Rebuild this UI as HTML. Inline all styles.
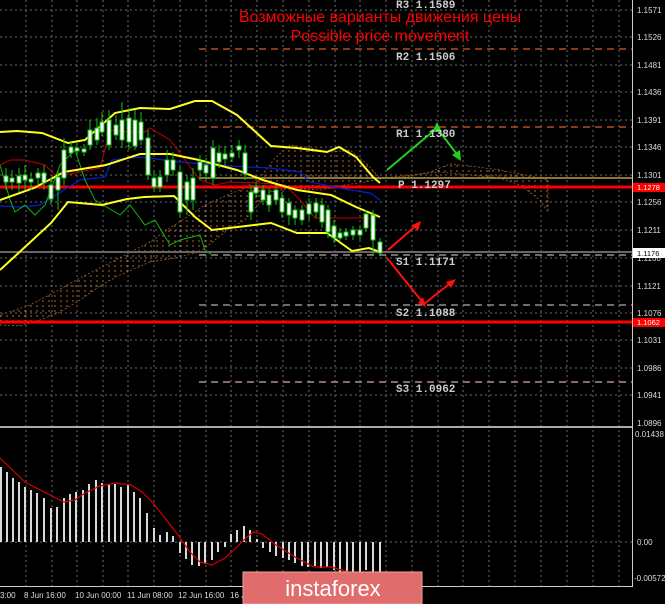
<!DOCTYPE html>
<html><head><meta charset="utf-8"><style>
html,body{margin:0;padding:0;background:#000;}
svg{display:block}
text{font-family:"Liberation Sans","DejaVu Sans",sans-serif}
.ax{fill:#ddd;font-size:8px}
.pv{fill:#ccc;font-family:"Liberation Mono",monospace;font-size:11px;font-weight:bold}
.dt{fill:#ddd;font-size:8px}
</style></head><body>
<svg width="665" height="604" viewBox="0 0 665 604" xmlns="http://www.w3.org/2000/svg">
<defs>
<pattern id="cl" width="6" height="5" patternUnits="userSpaceOnUse">
<line x1="1" y1="0" x2="1" y2="2" stroke="#b06828" stroke-width="1"/>
</pattern>
</defs>
<rect width="665" height="604" fill="#000"/>
<g stroke="#888" stroke-dasharray="2,3" stroke-width="1" opacity="0.8">
<line x1="0" y1="10" x2="632" y2="10"/><line x1="0" y1="37" x2="632" y2="37"/><line x1="0" y1="65" x2="632" y2="65"/><line x1="0" y1="92" x2="632" y2="92"/><line x1="0" y1="120" x2="632" y2="120"/><line x1="0" y1="147" x2="632" y2="147"/><line x1="0" y1="175" x2="632" y2="175"/><line x1="0" y1="202" x2="632" y2="202"/><line x1="0" y1="230" x2="632" y2="230"/><line x1="0" y1="258" x2="632" y2="258"/><line x1="0" y1="286" x2="632" y2="286"/><line x1="0" y1="313" x2="632" y2="313"/><line x1="0" y1="340" x2="632" y2="340"/><line x1="0" y1="368" x2="632" y2="368"/><line x1="0" y1="395" x2="632" y2="395"/>
<line x1="0" y1="542" x2="632" y2="542"/>
<line x1="26" y1="0" x2="26" y2="587"/><line x1="52" y1="0" x2="52" y2="587"/><line x1="77" y1="0" x2="77" y2="587"/><line x1="103" y1="0" x2="103" y2="587"/><line x1="128" y1="0" x2="128" y2="587"/><line x1="154" y1="0" x2="154" y2="587"/><line x1="180" y1="0" x2="180" y2="587"/><line x1="206" y1="0" x2="206" y2="587"/><line x1="231" y1="0" x2="231" y2="587"/><line x1="257" y1="0" x2="257" y2="587"/><line x1="283" y1="0" x2="283" y2="587"/><line x1="309" y1="0" x2="309" y2="587"/><line x1="335" y1="0" x2="335" y2="587"/><line x1="360" y1="0" x2="360" y2="587"/><line x1="386" y1="0" x2="386" y2="587"/><line x1="412" y1="0" x2="412" y2="587"/><line x1="438" y1="0" x2="438" y2="587"/><line x1="463" y1="0" x2="463" y2="587"/><line x1="489" y1="0" x2="489" y2="587"/><line x1="515" y1="0" x2="515" y2="587"/><line x1="541" y1="0" x2="541" y2="587"/><line x1="567" y1="0" x2="567" y2="587"/><line x1="593" y1="0" x2="593" y2="587"/><line x1="619" y1="0" x2="619" y2="587"/>
</g>
<polygon fill="url(#cl)" stroke="#a06030" stroke-dasharray="2,2" stroke-width="0.8" points="0,325 20,326 40,320 60,312 80,300 100,286 120,275 150,262 175,258 200,252 215,240 230,228 245,220 258,205 270,192 290,188 320,190 345,185 365,182 385,178 410,175 440,172 470,175 500,178 520,185 540,200 548,212 548,180 530,176 500,170 470,166 450,164 430,172 400,178 380,178 368,165 350,150 330,152 310,148 290,145 275,158 262,175 245,188 225,196 205,205 190,215 170,228 150,242 125,255 100,268 80,278 55,292 30,305 0,315"/>
<g stroke-width="1.5" stroke-dasharray="7,5">
<line x1="199" y1="49" x2="632" y2="49" stroke="#b05020"/>
<line x1="199" y1="127" x2="632" y2="127" stroke="#b05020"/>
<line x1="199" y1="255" x2="632" y2="255" stroke="#9a8a8a"/>
<line x1="199" y1="305" x2="632" y2="305" stroke="#9a8a8a"/>
<line x1="199" y1="382" x2="632" y2="382" stroke="#b09090"/>
</g>
<line x1="199" y1="178" x2="632" y2="178" stroke="#b8a040" stroke-width="1.5"/>
<line x1="0" y1="252" x2="632" y2="252" stroke="#666" stroke-width="2"/>
<line x1="0" y1="187" x2="632" y2="187" stroke="#ff0000" stroke-width="3"/>
<line x1="0" y1="322" x2="632" y2="322" stroke="#ff0000" stroke-width="3"/>
<polyline fill="none" stroke="#0020d0" stroke-width="1.2" points="0,206 20,207 40,205 80,180 105,177 112,160 140,157 180,162 230,166 270,168 300,172 310,182 350,190 370,193 380,200"/>
<polyline fill="none" stroke="#c00000" stroke-width="1" points="0,165 10,160 25,160 45,165 55,175 65,175 80,172 100,168 110,130 130,132 145,132 150,128 170,140 200,180 215,185 230,182 260,183 285,185 300,200 315,218 345,218 370,218"/>
<polyline fill="none" stroke="#10b010" stroke-width="1" points="0,165 10,200 15,212 25,205 35,215 45,205 60,165 75,150 85,180 95,200 120,215 130,205 145,225 155,220 170,245 180,240 200,235 205,250 212,255"/>
<g fill="none" stroke="#ffff20" stroke-width="2">
<polyline points="0,132 17,131 42,133 68,143 85,140 115,113 140,108 170,109 195,101 212,101 237,115 271,146 297,148 327,152 339,147 356,157 373,177 380,183"/>
<polyline points="0,200 34,188 64,172 106,165 140,154 170,154 199,160 237,170 263,180 297,190 331,195 356,207 380,217"/>
<polyline points="0,270 25,247 51,223 68,202 102,205 127,199 144,197 174,196 195,217 212,230 246,226 271,223 297,233 327,233 352,251 369,248 380,252"/>
</g>
<g stroke="#10c010" stroke-width="1" fill="#fff">
<line x1="6" y1="168" x2="6" y2="190"/><rect x="4" y="176" width="4" height="6"/>
<line x1="12" y1="170" x2="12" y2="190"/><rect x="10" y="178" width="4" height="4"/>
<line x1="19" y1="168" x2="19" y2="192"/><rect x="17" y="176" width="4" height="7"/>
<line x1="25" y1="165" x2="25" y2="190"/><rect x="23" y="175" width="4" height="5"/>
<line x1="31" y1="172" x2="31" y2="190"/><rect x="29" y="179" width="4" height="3"/>
<line x1="38" y1="168" x2="38" y2="186"/><rect x="36" y="173" width="4" height="5"/>
<line x1="44" y1="165" x2="44" y2="190"/><rect x="42" y="173" width="4" height="10"/>
<line x1="51" y1="178" x2="51" y2="205"/><rect x="49" y="185" width="4" height="14"/>
<line x1="58" y1="170" x2="58" y2="210"/><rect x="56" y="177" width="4" height="13"/>
<line x1="64" y1="138" x2="64" y2="185"/><rect x="62" y="150" width="4" height="28"/>
<line x1="71" y1="142" x2="71" y2="158"/><rect x="69" y="147" width="4" height="6"/>
<line x1="77" y1="143" x2="77" y2="155"/><rect x="75" y="148" width="4" height="3"/>
<line x1="84" y1="144" x2="84" y2="156"/><rect x="82" y="149" width="4" height="3"/>
<line x1="90" y1="120" x2="90" y2="150"/><rect x="88" y="130" width="4" height="15"/>
<line x1="97" y1="118" x2="97" y2="145"/><rect x="95" y="128" width="4" height="12"/>
<line x1="102" y1="112" x2="102" y2="136"/><rect x="100" y="122" width="4" height="10"/>
<line x1="109" y1="110" x2="109" y2="150"/><rect x="107" y="120" width="4" height="25"/>
<line x1="116" y1="115" x2="116" y2="140"/><rect x="114" y="125" width="4" height="10"/>
<line x1="122" y1="102" x2="122" y2="148"/><rect x="120" y="120" width="4" height="20"/>
<line x1="129" y1="108" x2="129" y2="150"/><rect x="127" y="118" width="4" height="24"/>
<line x1="135" y1="110" x2="135" y2="150"/><rect x="133" y="120" width="4" height="26"/>
<line x1="141" y1="112" x2="141" y2="145"/><rect x="139" y="122" width="4" height="18"/>
<line x1="148" y1="130" x2="148" y2="180"/><rect x="146" y="138" width="4" height="37"/>
<line x1="154" y1="170" x2="154" y2="192"/><rect x="152" y="178" width="4" height="9"/>
<line x1="160" y1="170" x2="160" y2="192"/><rect x="158" y="177" width="4" height="10"/>
<line x1="167" y1="150" x2="167" y2="182"/><rect x="165" y="160" width="4" height="15"/>
<line x1="173" y1="152" x2="173" y2="176"/><rect x="171" y="160" width="4" height="10"/>
<line x1="180" y1="165" x2="180" y2="218"/><rect x="178" y="172" width="4" height="40"/>
<line x1="187" y1="175" x2="187" y2="215"/><rect x="185" y="182" width="4" height="18"/>
<line x1="193" y1="168" x2="193" y2="210"/><rect x="191" y="178" width="4" height="22"/>
<line x1="200" y1="155" x2="200" y2="180"/><rect x="198" y="162" width="4" height="8"/>
<line x1="206" y1="158" x2="206" y2="180"/><rect x="204" y="165" width="4" height="8"/>
<line x1="213" y1="140" x2="213" y2="185"/><rect x="211" y="148" width="4" height="30"/>
<line x1="219" y1="145" x2="219" y2="168"/><rect x="217" y="153" width="4" height="9"/>
<line x1="225" y1="146" x2="225" y2="165"/><rect x="223" y="154" width="4" height="5"/>
<line x1="232" y1="145" x2="232" y2="162"/><rect x="230" y="153" width="4" height="4"/>
<line x1="239" y1="140" x2="239" y2="158"/><rect x="237" y="146" width="4" height="4"/>
<line x1="245" y1="145" x2="245" y2="180"/><rect x="243" y="153" width="4" height="21"/>
<line x1="251" y1="185" x2="251" y2="220"/><rect x="249" y="192" width="4" height="20"/>
<line x1="256" y1="182" x2="256" y2="198"/><rect x="254" y="187" width="4" height="6"/>
<line x1="263" y1="185" x2="263" y2="205"/><rect x="261" y="190" width="4" height="10"/>
<line x1="269" y1="188" x2="269" y2="212"/><rect x="267" y="195" width="4" height="10"/>
<line x1="276" y1="185" x2="276" y2="205"/><rect x="274" y="190" width="4" height="10"/>
<line x1="282" y1="192" x2="282" y2="218"/><rect x="280" y="198" width="4" height="14"/>
<line x1="289" y1="198" x2="289" y2="225"/><rect x="287" y="203" width="4" height="12"/>
<line x1="295" y1="205" x2="295" y2="225"/><rect x="293" y="210" width="4" height="8"/>
<line x1="302" y1="205" x2="302" y2="225"/><rect x="300" y="210" width="4" height="10"/>
<line x1="309" y1="198" x2="309" y2="220"/><rect x="307" y="204" width="4" height="10"/>
<line x1="316" y1="198" x2="316" y2="218"/><rect x="314" y="203" width="4" height="9"/>
<line x1="322" y1="198" x2="322" y2="228"/><rect x="320" y="205" width="4" height="17"/>
<line x1="328" y1="205" x2="328" y2="238"/><rect x="326" y="210" width="4" height="22"/>
<line x1="334" y1="220" x2="334" y2="243"/><rect x="332" y="226" width="4" height="12"/>
<line x1="340" y1="228" x2="340" y2="242"/><rect x="338" y="233" width="4" height="5"/>
<line x1="346" y1="228" x2="346" y2="240"/><rect x="344" y="232" width="4" height="4"/>
<line x1="353" y1="226" x2="353" y2="240"/><rect x="351" y="230" width="4" height="5"/>
<line x1="360" y1="226" x2="360" y2="240"/><rect x="358" y="230" width="4" height="5"/>
<line x1="366" y1="210" x2="366" y2="232"/><rect x="364" y="214" width="4" height="14"/>
<line x1="373" y1="210" x2="373" y2="255"/><rect x="371" y="215" width="4" height="25"/>
<line x1="380" y1="238" x2="380" y2="256"/><rect x="378" y="242" width="4" height="11"/>
</g>
<g fill="none" stroke-width="2">
<polyline points="387,170 437,128 459,157" stroke="#20d020"/>
<line x1="388" y1="250" x2="419" y2="223" stroke="#ff1010"/>
<polyline points="387,258 424,304 453,281" stroke="#ff1010"/>
</g>
<polygon points="437,122 442,132 432,132" fill="#20d020"/>
<polygon points="461,161 452,155 460,150" fill="#20d020"/>
<polygon points="421,221 418,231 412,225" fill="#ff1010"/>
<polygon points="456,279 451,288 446,282" fill="#ff1010"/>
<polygon points="426,307 418,303 423,297" fill="#ff1010"/>
<text class="pv" x="396" y="8">R3 1.1589</text>
<text class="pv" x="396" y="60">R2 1.1506</text>
<text class="pv" x="396" y="137">R1 1.1380</text>
<text class="pv" x="398" y="188">P 1.1297</text>
<text class="pv" x="396" y="265">S1 1.1171</text>
<text class="pv" x="396" y="316">S2 1.1088</text>
<text class="pv" x="396" y="392">S3 1.0962</text>
<text x="380" y="22" text-anchor="middle" fill="#ff0000" font-size="16">Возможные варианты движения цены</text>
<text x="380" y="41" text-anchor="middle" fill="#ff0000" font-size="16">Possible price movement</text>
<rect x="0" y="426" width="632" height="2" fill="#aaa"/>
<line x1="632.5" y1="0" x2="632.5" y2="587" stroke="#ccc"/>
<line x1="0" y1="586.5" x2="632" y2="586.5" stroke="#ccc"/>
<g class="ax">
<text x="637" y="13">1.1571</text><text x="637" y="40">1.1526</text><text x="637" y="68">1.1481</text><text x="637" y="95">1.1436</text><text x="637" y="123">1.1391</text><text x="637" y="150">1.1346</text><text x="637" y="178">1.1301</text><text x="637" y="205">1.1256</text><text x="637" y="233">1.1211</text><text x="637" y="261">1.1166</text><text x="637" y="289">1.1121</text><text x="637" y="316">1.1076</text><text x="637" y="343">1.1031</text><text x="637" y="371">1.0986</text><text x="637" y="398">1.0941</text><text x="637" y="426">1.0896</text>
<text x="635" y="437">0.01438</text><text x="637" y="545">0.00</text><text x="634" y="581">-0.00572</text>
</g>
<rect x="633" y="183" width="32" height="9" fill="#ff0000"/><text x="637" y="190" fill="#fff" font-size="7.5">1.1278</text>
<rect x="633" y="318" width="32" height="9" fill="#ff0000"/><text x="637" y="325" fill="#fff" font-size="7.5">1.1062</text>
<rect x="633" y="248" width="32" height="10" fill="#fff"/><text x="637" y="256" fill="#000" font-size="7.5">1.1176</text>
<g stroke="#d8d8d8" stroke-width="2">
<line x1="1" y1="542" x2="1" y2="467"/><line x1="7" y1="542" x2="7" y2="472"/><line x1="13" y1="542" x2="13" y2="478"/><line x1="19" y1="542" x2="19" y2="482"/><line x1="25" y1="542" x2="25" y2="487"/><line x1="31" y1="542" x2="31" y2="490"/><line x1="37" y1="542" x2="37" y2="493"/><line x1="44" y1="542" x2="44" y2="498"/><line x1="51" y1="542" x2="51" y2="508"/><line x1="57" y1="542" x2="57" y2="507"/><line x1="64" y1="542" x2="64" y2="498"/><line x1="70" y1="542" x2="70" y2="494"/><line x1="76" y1="542" x2="76" y2="492"/><line x1="83" y1="542" x2="83" y2="490"/><line x1="89" y1="542" x2="89" y2="484"/><line x1="96" y1="542" x2="96" y2="480"/><line x1="102" y1="542" x2="102" y2="483"/><line x1="109" y1="542" x2="109" y2="484"/><line x1="115" y1="542" x2="115" y2="484"/><line x1="121" y1="542" x2="121" y2="487"/><line x1="128" y1="542" x2="128" y2="485"/><line x1="134" y1="542" x2="134" y2="492"/><line x1="140" y1="542" x2="140" y2="498"/><line x1="147" y1="542" x2="147" y2="513"/><line x1="154" y1="542" x2="154" y2="528"/><line x1="160" y1="542" x2="160" y2="535"/><line x1="167" y1="542" x2="167" y2="532"/><line x1="173" y1="542" x2="173" y2="536"/>
<line x1="180" y1="542" x2="180" y2="553"/><line x1="186" y1="542" x2="186" y2="559"/><line x1="192" y1="542" x2="192" y2="565"/><line x1="199" y1="542" x2="199" y2="566"/><line x1="205" y1="542" x2="205" y2="564"/><line x1="212" y1="542" x2="212" y2="560"/><line x1="218" y1="542" x2="218" y2="552"/><line x1="225" y1="542" x2="225" y2="547"/>
<line x1="231" y1="542" x2="231" y2="534"/><line x1="237" y1="542" x2="237" y2="530"/><line x1="244" y1="542" x2="244" y2="526"/><line x1="250" y1="542" x2="250" y2="530"/><line x1="257" y1="542" x2="257" y2="539"/>
<line x1="263" y1="542" x2="263" y2="548"/><line x1="270" y1="542" x2="270" y2="552"/><line x1="276" y1="542" x2="276" y2="556"/><line x1="283" y1="542" x2="283" y2="558"/><line x1="289" y1="542" x2="289" y2="560"/><line x1="295" y1="542" x2="295" y2="563"/><line x1="302" y1="542" x2="302" y2="566"/><line x1="308" y1="542" x2="308" y2="567"/><line x1="315" y1="542" x2="315" y2="566"/><line x1="321" y1="542" x2="321" y2="568"/><line x1="327" y1="542" x2="327" y2="567"/><line x1="334" y1="542" x2="334" y2="570"/><line x1="340" y1="542" x2="340" y2="573"/><line x1="347" y1="542" x2="347" y2="576"/><line x1="353" y1="542" x2="353" y2="577"/><line x1="360" y1="542" x2="360" y2="575"/><line x1="366" y1="542" x2="366" y2="570"/><line x1="373" y1="542" x2="373" y2="574"/><line x1="380" y1="542" x2="380" y2="576"/>
</g>
<polyline fill="none" stroke="#d00000" stroke-width="1.2" points="0,458 25,482 50,495 64,502 75,500 85,493 100,486 115,483 131,485 142,492 153,503 165,518 178,535 190,552 200,562 212,565 225,558 237,547 248,536 254,532 262,534 276,545 295,557 314,567 331,567 352,573"/>
<g class="dt">
<text x="0" y="598">3:00</text><text x="24" y="598">8 Jun 16:00</text><text x="75" y="598">10 Jun 00:00</text><text x="127" y="598">11 Jun 08:00</text><text x="178" y="598">12 Jun 16:00</text><text x="230" y="598">16 J</text>
</g>
<rect x="243" y="572" width="179" height="32" fill="#e06c6c" stroke="#f0a0a0" stroke-width="1"/>
<text x="333" y="596" text-anchor="middle" fill="#fff" font-size="22">instaforex</text>
</svg>
</body></html>
